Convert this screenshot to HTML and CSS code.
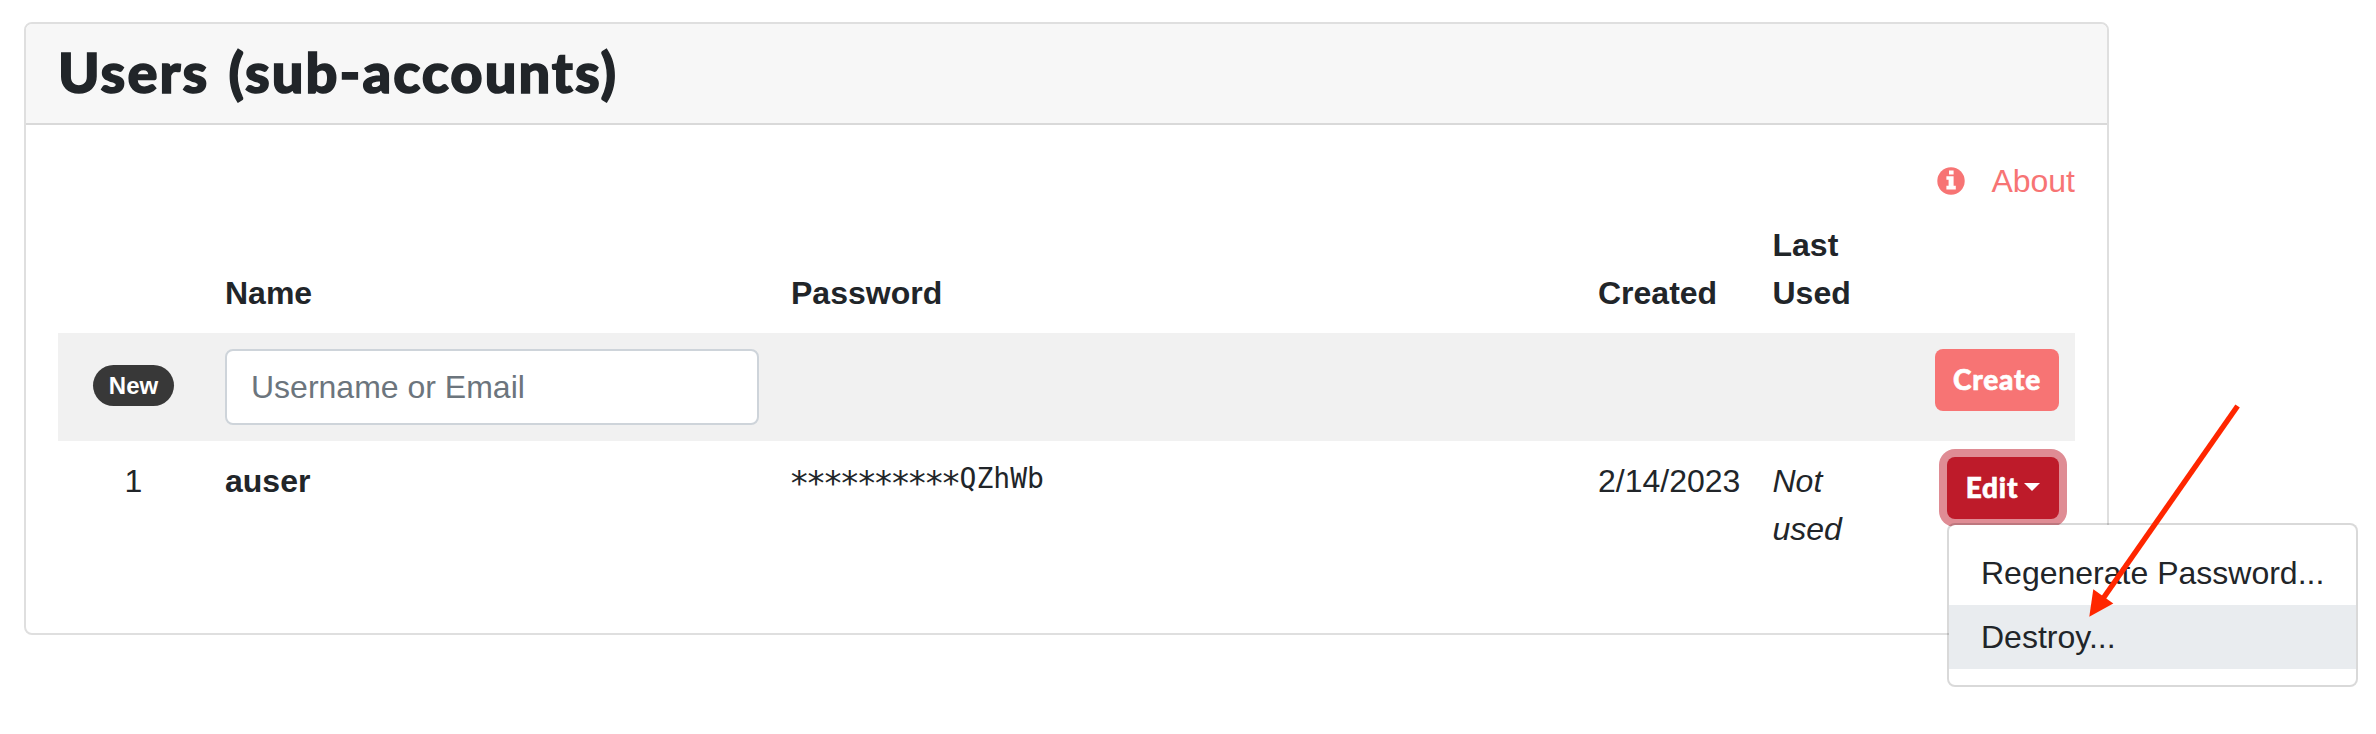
FILE: index.html
```
<!DOCTYPE html>
<html lang="en">
<head>
<meta charset="utf-8">
<title>Users (sub-accounts)</title>
<link rel="stylesheet" href="styles.css">
</head>
<body>
<main class="card">
  <header class="card-header"><h1 class="title">Users (sub-accounts)</h1></header>
  <div class="card-body">
    <a class="about">
      <svg class="about-icon" viewBox="0 0 28 28" aria-hidden="true">
        <circle cx="14" cy="14" r="13.7" fill="#f77474"/>
        <path d="M12 3.4h4.6v4H12zM9.4 9.2h7.2v9.6h2.2v3.6H9.4v-3.6h2.2v-6H9.4z" fill="#fff"/>
      </svg>
      <span>About</span>
    </a>
    <table class="users">
      <colgroup><col class="c-num"><col class="c-name"><col class="c-pass"><col class="c-created"><col class="c-used"><col></colgroup>
      <thead>
        <tr><th></th><th>Name</th><th>Password</th><th>Created</th><th>Last Used</th><th></th></tr>
      </thead>
      <tbody>
        <tr class="new-row">
          <td class="num"><span class="badge">New</span></td>
          <td><input class="field" type="text" placeholder="Username or Email"></td>
          <td></td><td></td><td></td>
          <td class="action"><button class="btn">Create</button></td>
        </tr>
        <tr>
          <td class="num">1</td>
          <td><b>auser</b></td>
          <td><code class="secret"><span class="stars">**********</span>QZhWb</code></td>
          <td>2/14/2023</td>
          <td><i>Not used</i></td>
          <td class="action">
            <div class="dropdown">
              <button class="btn btn-edit"><span>Edit</span><span class="caret"></span></button>
              <div class="menu">
                <a class="item">Regenerate Password...</a>
                <a class="item active">Destroy...</a>
              </div>
            </div>
          </td>
        </tr>
      </tbody>
    </table>
  </div>
</main>
<svg class="arrow" viewBox="0 0 160 220" aria-hidden="true">
  <path d="M157.6 6L22 200" stroke="#ff2600" stroke-width="5.4" fill="none"/>
  <path d="M9.3 216.8L13.3 189.3L33.3 203.5z" fill="#ff2600"/>
</svg>
</body>
</html>
```
FILE: styles.css
```
* { box-sizing: border-box; }
body {
  margin: 0;
  min-height: 734px;
  padding: 22px 24px;
  background: #fff;
  color: #212529;
  font: 32px/48px "Liberation Sans", Arial, sans-serif;
}
.card {
  width: 2085px;
  border: 2px solid #dfdfdf;
  border-radius: 8px;
}
.card-header {
  height: 101px;
  padding: 14px 32px;
  background: #f7f7f7;
  border-bottom: 2px solid #d9d9d9;
  border-radius: 6px 6px 0 0;
}
.title {
  margin: 0;
  font: 900 56px/67px Lato, sans-serif;
  letter-spacing: 2px;
  word-spacing: 4px;
  -webkit-text-stroke: 1.5px #212529;
  white-space: nowrap;
}
.card-body { padding: 32px; }
.about {
  display: flex;
  justify-content: flex-end;
  align-items: center;
  gap: 26px;
  color: #f77474;
}
.about-icon { width: 28px; height: 28px; }
.users {
  width: 2017px;
  margin-bottom: 32px;
  table-layout: fixed;
  border-collapse: collapse;
}
.c-num { width: 151px; }
.c-name { width: 566px; }
.c-pass { width: 807px; }
.c-created { width: 174.5px; }
.c-used { width: 120px; }
th, td { padding: 16px; text-align: left; vertical-align: top; }
th { vertical-align: bottom; }
td { white-space: nowrap; }
td i { white-space: normal; }
.new-row { background: #f1f1f1; }
.new-row td { height: 108px; }
td.num { text-align: center; }
.badge {
  display: inline-block;
  height: 41px;
  padding: 0 16px;
  margin-top: 16px;
  border-radius: 21px;
  background: #383838;
  color: #fff;
  font-weight: 700;
  font-size: 24px;
  line-height: 41px;
  vertical-align: top;
}
.field {
  display: block;
  width: 534px;
  height: 76px;
  padding: 0 24px;
  border: 2px solid #ced4da;
  border-radius: 8px;
  background: #fff;
  font: inherit;
}
.field::placeholder { color: #6c757d; opacity: 1; }
.action { text-align: right; }
.btn {
  display: inline-flex;
  justify-content: center;
  align-items: center;
  width: 124px;
  height: 62px;
  padding: 0 0 2px;
  border: 0;
  border-radius: 8px;
  background: #f77474;
  color: #fff;
  font: 900 28px/42px Lato, sans-serif;
  letter-spacing: 0.8px;
  -webkit-text-stroke: 0.6px #fff;
  vertical-align: top;
}
.btn-edit {
  gap: 6px;
  width: 112px;
  background: #be1b2a;
  box-shadow: 0 0 0 8px #df8c94;
}
.caret {
  border-top: 8px solid #fff;
  border-left: 8px solid transparent;
  border-right: 8px solid transparent;
}
.secret {
  display: block;
  padding-top: 1px;
  font: 28px/42px "DejaVu Sans Mono", monospace;
}
.stars {
  position: relative;
  top: 7px;
  margin-left: -2px;
  margin-right: 2px;
  font-size: 34px;
  line-height: 1;
  letter-spacing: -3.61px;
}
.dropdown { position: relative; display: inline-block; vertical-align: top; }
.menu {
  position: absolute;
  top: 66px;
  left: 0;
  width: 411px;
  padding: 16px 0;
  border: 2px solid rgba(0, 0, 0, .15);
  border-radius: 8px;
  background: #fff;
  background-clip: padding-box;
  text-align: left;
}
.item { display: block; padding: 8px 32px; }
.active { background: #e9ecef; }
.arrow {
  position: absolute;
  left: 2080px;
  top: 400px;
  width: 160px;
  height: 220px;
}
```
